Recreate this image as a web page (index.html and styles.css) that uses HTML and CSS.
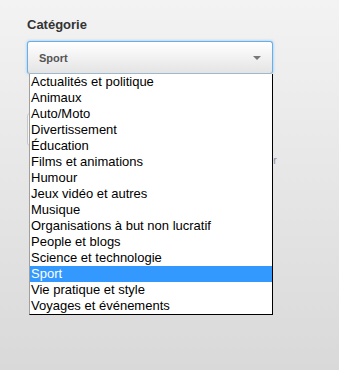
FILE: index.html
```html
<!DOCTYPE html>
<html lang="fr">
<head>
    <meta charset="UTF-8">
    <meta name="viewport" content="width=device-width, initial-scale=1.0">
    <title>Catégorie</title>
    <link rel="stylesheet" href="styles.css">
</head>
<body>
    <div class="form">
        <div class="field">
            <label class="label">Catégorie</label>
            <div class="select-wrap">
                <div class="select">
                    <span class="select-value">Sport</span>
                    <span class="caret"></span>
                </div>
                <ul class="listbox">
                    <li>Actualités et politique</li>
                    <li>Animaux</li>
                    <li>Auto/Moto</li>
                    <li>Divertissement</li>
                    <li>Éducation</li>
                    <li>Films et animations</li>
                    <li>Humour</li>
                    <li>Jeux vidéo et autres</li>
                    <li>Musique</li>
                    <li>Organisations à but non lucratif</li>
                    <li>People et blogs</li>
                    <li>Science et technologie</li>
                    <li class="selected">Sport</li>
                    <li>Vie pratique et style</li>
                    <li>Voyages et événements</li>
                </ul>
            </div>
        </div>

        <!-- champ caché sous la liste ouverte -->
        <div class="field field-under">
            <div class="textbox"></div>
            <p class="hint">Rechercher</p>
        </div>
    </div>
</body>
</html>
```

FILE: styles.css
```css
html, body {
    height: 100%;
}
body {
    margin: 0;
    font-family: "Liberation Sans", Arial, sans-serif;
    background: linear-gradient(#f3f3f3, #d9d9d9);
    min-height: 370px;
}
.form {
    padding: 17px 66px 0 27px;
}
.label {
    display: block;
    font-size: 13px;
    font-weight: bold;
    line-height: 16px;
    color: #333;
    margin-bottom: 8px;
}
.select-wrap {
    position: relative;
}
.select {
    height: 31px;
    border: 1px solid #66afe9;
    border-bottom-color: #9fb8cc;
    border-radius: 3px;
    background: linear-gradient(#ffffff, #e4e4e4);
    box-shadow: 0 0 3px rgba(102, 175, 233, 0.7);
    display: flex;
    align-items: center;
    justify-content: space-between;
    padding: 0 11px 0 11px;
}
.select-value {
    font-size: 11px;
    font-weight: bold;
    color: #555;
}
.caret {
    width: 0;
    height: 0;
    border-left: 4px solid transparent;
    border-right: 4px solid transparent;
    border-top: 4px solid #777;
}
.listbox {
    position: absolute;
    top: 33px;
    left: 2px;
    width: 242px;
    margin: 0;
    padding: 0;
    list-style: none;
    background: #fff;
    border-left: 1px solid #a0a0a0;
    border-right: 1px solid #000;
    border-bottom: 1px solid #000;
    z-index: 2;
}
.listbox li {
    font-size: 13px;
    line-height: 16px;
    height: 16px;
    padding-left: 1px;
    color: #000;
    white-space: nowrap;
}
.listbox li.selected {
    background: #3399ff;
    color: #fff;
}
.field-under {
    margin-top: 39px;
}
.textbox {
    height: 31px;
    border: 1px solid #c8c8c8;
    border-radius: 3px;
    background: #f6f6f6;
}
.hint {
    margin: 8px -4px 0 0;
    text-align: right;
    font-size: 11px;
    color: #8a90a0;
}
```
